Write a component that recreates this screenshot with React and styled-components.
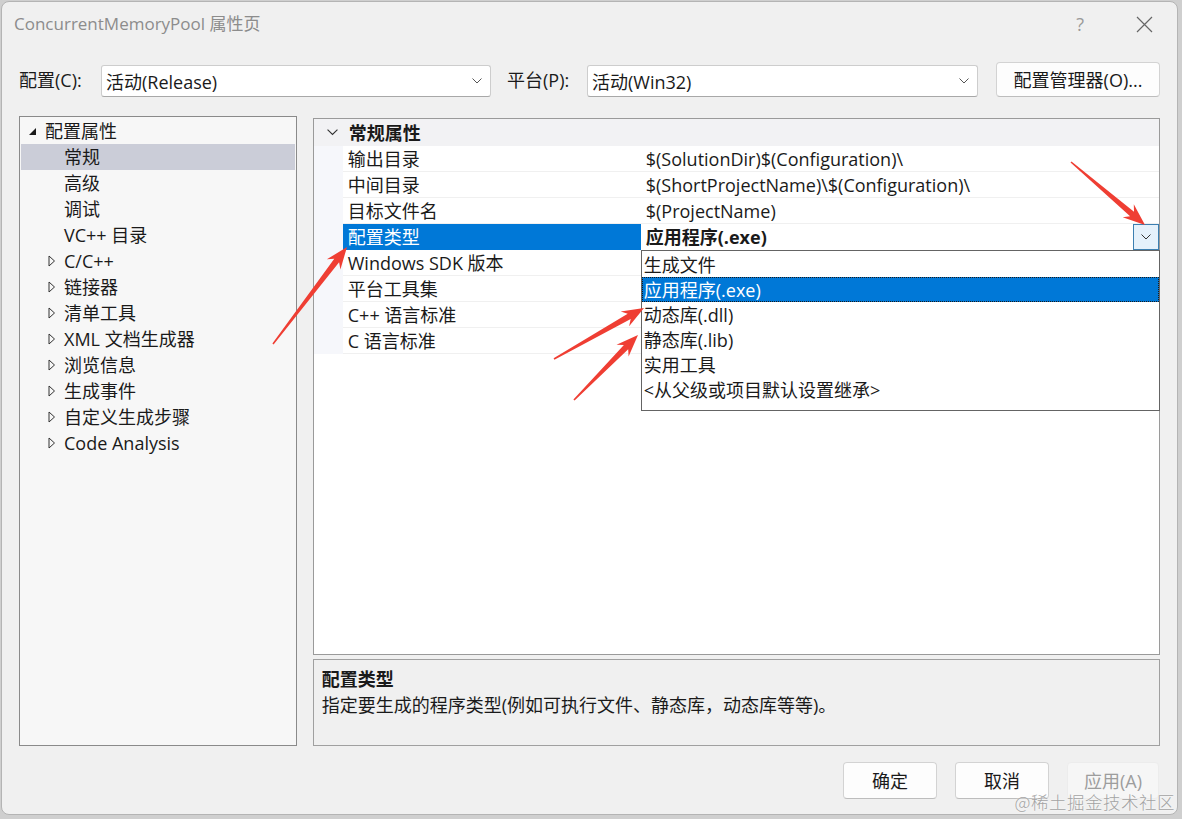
import React from "react";
import styled, { createGlobalStyle } from "styled-components";

const Global = createGlobalStyle`
  html, body { margin: 0; padding: 0; }
  body {
    background: #cfcfcf;
    font-family: "Open Sans", "Noto Sans CJK SC", sans-serif;
    font-size: 18px;
    color: #1a1a1a;
    overflow: hidden;
  }
  #root { width: 1182px; height: 819px; position: relative; }
`;

const Window = styled.div`
  position: relative;
  box-sizing: border-box;
  margin: 1px 0 0 1px;
  width: 1177px;
  height: 814px;
  background: #f0f0f0;
  border: 1px solid #b4b4b4;
  border-radius: 8px;
  display: flex;
  flex-direction: column;
  padding: 0 17px 0 17px;
  overflow: hidden;
`;

const TitleBar = styled.div`
  height: 44px;
  margin: 0 -17px 0 -5px;
  display: flex;
  align-items: center;
  justify-content: space-between;
`;

const Title = styled.div`
  color: #8c8c8c;
  font-size: 17px;
  line-height: 20px;
`;

const TitleButtons = styled.div`
  display: flex;
  align-items: center;
  gap: 52px;
  padding-right: 24px;
`;

const Help = styled.span`
  color: #9a9a9a;
  font-size: 18px;
  line-height: 20px;
`;

const ConfigRow = styled.div`
  margin-top: 16px;
  height: 35px;
  display: flex;
  align-items: center;
`;

const FieldLabel = styled.div`
  width: ${(p) => p.$w}px;
  flex: none;
  line-height: 20px;
`;

const Select = styled.div`
  box-sizing: border-box;
  width: ${(p) => p.$w}px;
  height: 32px;
  margin-top: 3px;
  background: #fff;
  border: 1px solid #cdcdcd;
  border-bottom-color: #a8a8a8;
  border-radius: 3px;
  display: flex;
  align-items: center;
  justify-content: space-between;
  padding: 0 8px 0 4px;
  margin-right: ${(p) => p.$mr || 0}px;
  flex: none;
`;

const Button = styled.div`
  box-sizing: border-box;
  width: ${(p) => p.$w}px;
  height: ${(p) => p.$h || 37}px;
  background: ${(p) => (p.$disabled ? "#f6f6f6" : "#fdfdfd")};
  border: 1px solid ${(p) => (p.$disabled ? "#ececec" : "#d3d3d3")};
  border-bottom-color: ${(p) => (p.$disabled ? "#ececec" : "#bdbdbd")};
  border-radius: 4px;
  color: ${(p) => (p.$disabled ? "#9d9d9d" : "#1a1a1a")};
  display: flex;
  align-items: center;
  justify-content: center;
  flex: none;
  line-height: 20px;
`;

const Main = styled.div`
  margin-top: 19px;
  display: flex;
  gap: 16px;
  height: 630px;
`;

const TreePanel = styled.div`
  box-sizing: border-box;
  width: 278px;
  height: 630px;
  background: #f7f7f7;
  border: 1px solid #8a8a8a;
  padding: 1px 1px;
`;

const TreeRow = styled.div`
  height: 26px;
  display: flex;
  align-items: center;
  background: ${(p) => (p.$selected ? "#cbcdd8" : "transparent")};
  padding-left: ${(p) => p.$indent}px;
  line-height: 20px;
`;

const TreeToggle = styled.span`
  width: ${(p) => p.$w}px;
  flex: none;
  display: flex;
  align-items: center;
`;

const RightColumn = styled.div`
  width: 848px;
  margin-top: 2px;
  display: flex;
  flex-direction: column;
  gap: 4px;
`;

const GridPanel = styled.div`
  position: relative;
  box-sizing: border-box;
  height: 538px;
  background: #fff;
  border: 1px solid #9a9a9a;
`;

const GroupHeader = styled.div`
  height: 27px;
  background: #f2f2f4;
  display: flex;
  align-items: center;
  font-weight: 700;
  line-height: 20px;
`;

const GroupChevron = styled.span`
  width: 35px;
  flex: none;
  display: flex;
  justify-content: center;
  padding-left: 2px;
  box-sizing: border-box;
`;

const PropRow = styled.div`
  display: grid;
  grid-template-columns: 29px 298px 1fr;
  height: 26px;
`;

const Gutter = styled.div`
  background: #f6f7fb;
`;

const NameCell = styled.div`
  box-sizing: border-box;
  display: flex;
  align-items: center;
  padding-left: 5px;
  line-height: 20px;
  white-space: nowrap;
  background: ${(p) => (p.$selected ? "#0078d7" : "#fff")};
  color: ${(p) => (p.$selected ? "#fff" : "#1a1a1a")};
  border-bottom: 1px solid ${(p) => (p.$selected ? "#0078d7" : "#f0f0f0")};
`;

const ValueCell = styled.div`
  box-sizing: border-box;
  display: flex;
  align-items: center;
  justify-content: space-between;
  padding-left: 5px;
  line-height: 20px;
  white-space: nowrap;
  font-weight: ${(p) => (p.$bold ? 700 : 400)};
  border-bottom: 1px solid #f0f0f0;
`;

const DropButton = styled.div`
  box-sizing: border-box;
  width: 26px;
  height: 26px;
  background: #e5f1fb;
  border: 1px solid #3c7fb1;
  display: flex;
  align-items: center;
  justify-content: center;
`;

const DropList = styled.div`
  position: absolute;
  left: 327px;
  top: 131px;
  width: 519px;
  height: 161px;
  box-sizing: border-box;
  background: #fff;
  border: 1px solid #646464;
  padding-top: 1px;
`;

const DropItem = styled.div`
  box-sizing: border-box;
  height: 25px;
  display: flex;
  align-items: center;
  padding-left: 2px;
  line-height: 20px;
  white-space: nowrap;
  background: ${(p) => (p.$selected ? "#0078d7" : "transparent")};
  color: ${(p) => (p.$selected ? "#fff" : "#1a1a1a")};
  outline: ${(p) => (p.$selected ? "1px dotted #1a1a1a" : "none")};
  outline-offset: -1px;
`;

const DescPanel = styled.div`
  box-sizing: border-box;
  height: 87px;
  background: #f0f0f0;
  border: 1px solid #a0a0a0;
  padding: 6px 8px;
  line-height: 26px;
`;

const DescTitle = styled.div`
  font-weight: 700;
`;

const Footer = styled.div`
  margin-top: 16px;
  display: flex;
  justify-content: flex-end;
  gap: 18px;
  padding-right: 1px;
`;

const Watermark = styled.div`
  position: absolute;
  right: 2px;
  bottom: 0px;
  font-family: "Noto Sans CJK SC", sans-serif;
  font-weight: 300;
  font-size: 17.5px;
  color: #a3a3a3;
  letter-spacing: 0.5px;
  text-shadow: 0 0 2px #fff;
`;

const ArrowLayer = styled.svg`
  position: absolute;
  left: 0;
  top: 0;
  pointer-events: none;
`;

const Chevron = ({ size = 10, color = "#555" }) => (
  <svg width={size} height={size * 0.6} viewBox="0 0 10 6">
    <path d="M0.5 0.5 L5 5 L9.5 0.5" fill="none" stroke={color} strokeWidth="1" />
  </svg>
);

const ExpandedIcon = () => (
  <svg width="9" height="9" viewBox="0 0 9 9">
    <path d="M8 1 L8 8 L1 8 Z" fill="#1a1a1a" />
  </svg>
);

const CollapsedIcon = () => (
  <svg width="8" height="12" viewBox="0 0 8 12">
    <path d="M1 1 L6.5 6 L1 11 Z" fill="none" stroke="#333" strokeWidth="1" />
  </svg>
);

const CloseIcon = () => (
  <svg width="17" height="17" viewBox="0 0 17 17">
    <path d="M1 1 L16 16 M16 1 L1 16" stroke="#666" strokeWidth="1.2" />
  </svg>
);

function arrowPoints(tx, ty, px, py) {
  const dx = px - tx;
  const dy = py - ty;
  const L = Math.hypot(dx, dy);
  const ux = dx / L;
  const uy = dy / L;
  const nx = -uy;
  const ny = ux;
  const head = 22;
  const neckD = 17;
  const pt = (d, w) => [px - ux * d + nx * w, py - uy * d + ny * w];
  const pts = [
    [tx + nx * 0.8, ty + ny * 0.8],
    pt(neckD, 3),
    pt(head, 8.5),
    [px, py],
    pt(head, -8.5),
    pt(neckD, -3),
    [tx - nx * 0.8, ty - ny * 0.8],
  ];
  return pts.map((p) => p.map((v) => v.toFixed(1)).join(",")).join(" ");
}

const arrows = [
  [273, 343, 347, 246],
  [554, 358, 644, 307],
  [574, 399, 638, 334],
  [1071, 161, 1145, 224],
];

const tree = [
  { label: "常规", selected: true },
  { label: "高级" },
  { label: "调试" },
  { label: "VC++ 目录" },
  { label: "C/C++", toggle: true },
  { label: "链接器", toggle: true },
  { label: "清单工具", toggle: true },
  { label: "XML 文档生成器", toggle: true },
  { label: "浏览信息", toggle: true },
  { label: "生成事件", toggle: true },
  { label: "自定义生成步骤", toggle: true },
  { label: "Code Analysis", toggle: true },
];

const props = [
  { name: "输出目录", value: "$(SolutionDir)$(Configuration)\\" },
  { name: "中间目录", value: "$(ShortProjectName)\\$(Configuration)\\" },
  { name: "目标文件名", value: "$(ProjectName)" },
  { name: "配置类型", value: "应用程序(.exe)", selected: true },
  { name: "Windows SDK 版本", value: "" },
  { name: "平台工具集", value: "" },
  { name: "C++ 语言标准", value: "" },
  { name: "C 语言标准", value: "" },
];

const options = [
  "生成文件",
  "应用程序(.exe)",
  "动态库(.dll)",
  "静态库(.lib)",
  "实用工具",
  "<从父级或项目默认设置继承>",
];

export default function App() {
  return (
    <>
      <Global />
      <Window>
        <TitleBar>
          <Title>ConcurrentMemoryPool 属性页</Title>
          <TitleButtons>
            <Help>?</Help>
            <CloseIcon />
          </TitleButtons>
        </TitleBar>

        <ConfigRow>
          <FieldLabel $w={82}>配置(C):</FieldLabel>
          <Select $w={390} $mr={16}>
            <span>活动(Release)</span>
            <Chevron />
          </Select>
          <FieldLabel $w={80}>平台(P):</FieldLabel>
          <Select $w={391} $mr={18}>
            <span>活动(Win32)</span>
            <Chevron />
          </Select>
          <Button $w={164} $h={35}>配置管理器(O)...</Button>
        </ConfigRow>

        <Main>
          <TreePanel>
            <TreeRow $indent={7}>
              <TreeToggle $w={17}>
                <ExpandedIcon />
              </TreeToggle>
              配置属性
            </TreeRow>
            {tree.map((t) => (
              <TreeRow key={t.label} $indent={27} $selected={t.selected}>
                <TreeToggle $w={16}>{t.toggle && <CollapsedIcon />}</TreeToggle>
                {t.label}
              </TreeRow>
            ))}
          </TreePanel>

          <RightColumn>
            <GridPanel>
              <GroupHeader>
                <GroupChevron>
                  <Chevron size={11} color="#333" />
                </GroupChevron>
                常规属性
              </GroupHeader>
              {props.map((p) => (
                <PropRow key={p.name}>
                  <Gutter />
                  <NameCell $selected={p.selected}>{p.name}</NameCell>
                  <ValueCell $bold={p.selected}>
                    <span>{p.value}</span>
                    {p.selected && (
                      <DropButton>
                        <Chevron size={10} color="#333" />
                      </DropButton>
                    )}
                  </ValueCell>
                </PropRow>
              ))}
              <DropList>
                {options.map((o, i) => (
                  <DropItem key={o} $selected={i === 1}>
                    {o}
                  </DropItem>
                ))}
              </DropList>
            </GridPanel>
            <DescPanel>
              <DescTitle>配置类型</DescTitle>
              <div>指定要生成的程序类型(例如可执行文件、静态库，动态库等等)。</div>
            </DescPanel>
          </RightColumn>
        </Main>

        <Footer>
          <Button $w={94}>确定</Button>
          <Button $w={94}>取消</Button>
          <Button $w={92} $disabled>应用(A)</Button>
        </Footer>
        <Watermark>@稀土掘金技术社区</Watermark>
      </Window>
      <ArrowLayer width="1182" height="819" viewBox="0 0 1182 819">
        {arrows.map((a, i) => (
          <polygon key={i} points={arrowPoints(...a)} fill="#ef3e33" />
        ))}
      </ArrowLayer>
    </>
  );
}
